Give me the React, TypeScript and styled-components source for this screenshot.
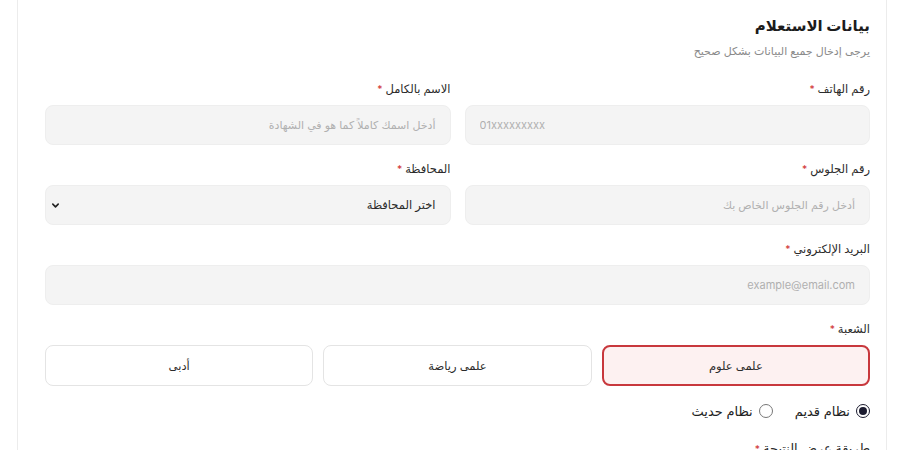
import React, { useState } from "react";
import styled, { createGlobalStyle, css } from "styled-components";

const GlobalStyle = createGlobalStyle`
  html, body {
    margin: 0;
    padding: 0;
    background: #ffffff;
  }
  body {
    font-family: "Inter", "DejaVu Sans", sans-serif;
    color: #222;
  }
  * {
    box-sizing: border-box;
  }
`;

const Page = styled.div`
  direction: rtl;
  width: 900px;
  height: 450px;
  overflow: hidden;
  padding: 0 13px 0 17px;
`;

const Card = styled.section`
  background: #fff;
  border-left: 1px solid #ececec;
  border-right: 1px solid #ececec;
  padding: 15px 16px 0 27px;
  min-height: 460px;
`;

const Title = styled.h2`
  margin: 0;
  font-size: 15px;
  line-height: 22px;
  font-weight: 700;
  color: #1c1c1c;
`;

const Subtitle = styled.p`
  margin: 5px 0 0 0;
  font-size: 11px;
  line-height: 18px;
  color: #8a8a8a;
`;

const Grid = styled.div`
  display: grid;
  grid-template-columns: 1fr 1fr;
  column-gap: 14px;
  row-gap: 15px;
  margin-top: 20px;
`;

const Field = styled.div<{ $wide?: boolean }>`
  display: flex;
  flex-direction: column;
  gap: 7px;
  ${(p) =>
    p.$wide &&
    css`
      grid-column: 1 / -1;
    `}
`;

const Label = styled.label`
  font-size: 11.5px;
  line-height: 18px;
  font-weight: 500;
  color: #2b2b2b;
`;

const Star = styled.span`
  color: #d23a3a;
  margin-right: 3px;
  font-size: 10px;
`;

const TextInput = styled.input<{ $ltr?: boolean }>`
  height: 40px;
  width: 100%;
  border: 1px solid #eeeeee;
  border-radius: 8px;
  background: #f4f4f4;
  padding: 0 14px;
  font-family: "Inter", "DejaVu Sans", sans-serif;
  font-size: 11px;
  color: #333;
  outline: none;
  direction: ${(p) => (p.$ltr ? "ltr" : "rtl")};
  text-align: ${(p) => (p.$ltr ? "left" : "right")};

  &::placeholder {
    color: #b0b0b0;
  }
`;

const SelectWrap = styled.div`
  position: relative;
`;

const Select = styled.select`
  height: 40px;
  width: 100%;
  border: 1px solid #eeeeee;
  border-radius: 8px;
  background: #f4f4f4;
  padding: 0 14px;
  font-family: "Inter", "DejaVu Sans", sans-serif;
  font-size: 11.5px;
  font-weight: 400;
  color: #2b2b2b;
  outline: none;
  appearance: none;
  -webkit-appearance: none;
`;

const Chevron = styled.svg`
  position: absolute;
  left: 6px;
  top: 16px;
  width: 9px;
  height: 9px;
  pointer-events: none;
`;

const BranchBlock = styled.div`
  margin-top: 15px;
  display: flex;
  flex-direction: column;
  gap: 7px;
`;

const BranchRow = styled.div`
  display: grid;
  grid-template-columns: repeat(3, 1fr);
  gap: 10px;
`;

const BranchButton = styled.button<{ $active: boolean }>`
  height: 41px;
  border-radius: 8px;
  border: 1px solid #e4e4e4;
  background: #fff;
  font-family: "Inter", "DejaVu Sans", sans-serif;
  font-size: 11.5px;
  color: #2b2b2b;
  cursor: pointer;

  ${(p) =>
    p.$active &&
    css`
      border: 2px solid #c8383d;
      background: #fdf1f1;
    `}
`;

const RadioRow = styled.div`
  display: flex;
  gap: 22px;
  margin-top: 17px;
  align-items: center;
`;

const RadioOption = styled.label`
  display: flex;
  align-items: center;
  gap: 6px;
  font-size: 13px;
  color: #222;
  cursor: pointer;
`;

const RadioDot = styled.span<{ $checked: boolean }>`
  width: 14px;
  height: 14px;
  border-radius: 50%;
  border: 1px solid ${(p) => (p.$checked ? "#1b1b2f" : "#777")};
  display: flex;
  align-items: center;
  justify-content: center;
  background: #fff;

  &::after {
    content: "";
    width: 8px;
    height: 8px;
    border-radius: 50%;
    background: ${(p) => (p.$checked ? "#1b1b2f" : "transparent")};
  }
`;

const NextLabel = styled(Label)`
  display: block;
  margin-top: 20px;
  font-size: 13px;
`;

const branches = ["علمى علوم", "علمى رياضة", "أدبى"];

export default function App() {
  const [branch, setBranch] = useState(branches[0]);
  const [system, setSystem] = useState("old");

  return (
    <Page>
      <GlobalStyle />
      <Card>
        <Title>بيانات الاستعلام</Title>
        <Subtitle>يرجى إدخال جميع البيانات بشكل صحيح</Subtitle>
        <Grid>
          <Field>
            <Label>
              رقم الهاتف<Star>*</Star>
            </Label>
            <TextInput $ltr placeholder="01xxxxxxxxx" />
          </Field>
          <Field>
            <Label>
              الاسم بالكامل<Star>*</Star>
            </Label>
            <TextInput placeholder="أدخل اسمك كاملاً كما هو في الشهادة" />
          </Field>
          <Field>
            <Label>
              رقم الجلوس<Star>*</Star>
            </Label>
            <TextInput placeholder="أدخل رقم الجلوس الخاص بك" />
          </Field>
          <Field>
            <Label>
              المحافظة<Star>*</Star>
            </Label>
            <SelectWrap>
              <Select defaultValue="">
                <option value="">اختر المحافظة</option>
              </Select>
              <Chevron viewBox="0 0 10 10">
                <path
                  d="M2 3.5 L5 6.5 L8 3.5"
                  fill="none"
                  stroke="#222"
                  strokeWidth="1.8"
                  strokeLinecap="round"
                  strokeLinejoin="round"
                />
              </Chevron>
            </SelectWrap>
          </Field>
          <Field $wide>
            <Label>
              البريد الإلكتروني<Star>*</Star>
            </Label>
            <TextInput placeholder="example@email.com" />
          </Field>
        </Grid>
        <BranchBlock>
          <Label>
            الشعبة<Star>*</Star>
          </Label>
          <BranchRow>
            {branches.map((b) => (
              <BranchButton
                key={b}
                $active={branch === b}
                onClick={() => setBranch(b)}
              >
                {b}
              </BranchButton>
            ))}
          </BranchRow>
        </BranchBlock>
        <RadioRow>
          <RadioOption onClick={() => setSystem("old")}>
            <RadioDot $checked={system === "old"} />
            نظام قديم
          </RadioOption>
          <RadioOption onClick={() => setSystem("new")}>
            <RadioDot $checked={system === "new"} />
            نظام حديث
          </RadioOption>
        </RadioRow>
        <NextLabel>
          طريقة عرض النتيجة<Star>*</Star>
        </NextLabel>
      </Card>
    </Page>
  );
}
